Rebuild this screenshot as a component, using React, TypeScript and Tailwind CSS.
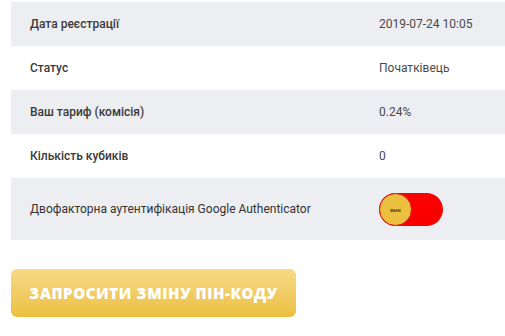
import React from "react"

const rows = [
  { label: "Дата реєстрації", value: "2019-07-24 10:05" },
  { label: "Статус", value: "Початківець" },
  { label: "Ваш тариф (комісія)", value: "0.24%" },
  { label: "Кількість кубиків", value: "0" },
]

function Toggle() {
  return (
    <div className="w-[64px] h-[33px] rounded-full bg-[#fb0000] flex items-center">
      <div className="w-[33px] h-[33px] rounded-full bg-[#ecc03f] border border-[#d81c10] flex items-center justify-center">
        <span className="text-[6px] font-medium text-[#3e4a2a]">вмк</span>
      </div>
    </div>
  )
}

export default function App() {
  return (
    <div className="w-[505px] h-[336px] bg-white overflow-hidden pt-[2px] font-['Roboto',sans-serif]">
      <div className="ml-[11px] w-[500px]">
        {rows.map((row, i) => (
          <div
            key={row.label}
            className={`flex items-center h-[44px] ${i % 2 === 0 ? "bg-[#edeef1]" : "bg-white"}`}
          >
            <div className="w-[368px] pl-[19px] text-[12px] font-medium text-[#3a3a3a]">{row.label}</div>
            <div className="text-[12px] text-[#4a4a4a]">{row.value}</div>
          </div>
        ))}
        <div className="flex items-center h-[62px] bg-[#edeef1]">
          <div className="w-[368px] pl-[19px] text-[12px] text-[#333]">
            Двофакторна аутентифікація Google Authenticator
          </div>
          <Toggle />
        </div>
      </div>
      <button className="ml-[11px] mt-[29px] w-[285px] h-[48px] rounded-[6px] bg-gradient-to-b from-[#f7da86] to-[#ebbf3d] text-white text-[15px] font-extrabold uppercase font-['Open_Sans',sans-serif] tracking-[0.6px]">
        Запросити зміну пін-коду
      </button>
    </div>
  )
}
